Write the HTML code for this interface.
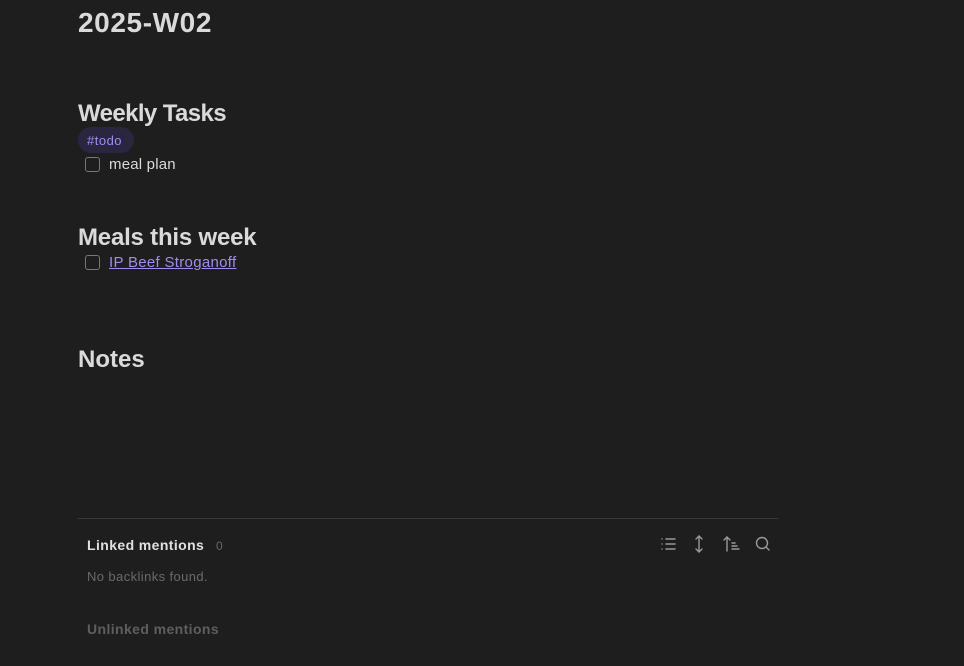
<!DOCTYPE html>
<html><head><style>
body{margin:0;width:964px;height:666px;background:#1e1e1e;font-family:"Liberation Sans",sans-serif;color:#dadada;position:relative;overflow:hidden}
.a{position:absolute;white-space:nowrap}
.cb{position:absolute;border:1px solid #777;border-radius:3px;box-sizing:border-box}
</style></head><body>
<div class="a" style="left:78px;top:7px;font-size:28px;font-weight:bold;letter-spacing:0.6px">2025-W02</div>
<div class="a" style="left:78px;top:100px;font-size:24px;font-weight:bold;letter-spacing:-0.6px">Weekly Tasks</div>
<div class="a" style="left:78px;top:127px;width:56px;height:26px;border-radius:13px;background:#2a2640"></div>
<div class="a" style="left:87px;top:133px;font-size:13px;color:#a18bf0;letter-spacing:0.5px">#todo</div>
<div class="cb" style="left:85px;top:157px;width:15px;height:15px"></div>
<div class="a" style="left:109px;top:156px;font-size:15px;letter-spacing:0.2px">meal plan</div>
<div class="a" style="left:78px;top:224px;font-size:24px;font-weight:bold;letter-spacing:-0.2px">Meals this week</div>
<div class="cb" style="left:85px;top:255px;width:15px;height:15px"></div>
<div class="a" style="left:109px;top:254px;font-size:15px;color:#a18bf0;text-decoration:underline;letter-spacing:0.3px">IP Beef Stroganoff</div>
<div class="a" style="left:78px;top:346px;font-size:24px;font-weight:bold;letter-spacing:0px">Notes</div>
<div class="a" style="left:78px;top:518px;width:700px;height:1px;background:#3a3a3a"></div>
<div class="a" style="left:87px;top:537px;font-size:14px;font-weight:bold;color:#e0e0e0;letter-spacing:0.4px">Linked mentions</div>
<div class="a" style="left:216px;top:539px;font-size:12px;color:#666">0</div>
<div class="a" style="left:87px;top:569px;font-size:13px;color:#6a6a6a;letter-spacing:0.4px">No backlinks found.</div>
<div class="a" style="left:87px;top:621px;font-size:14px;font-weight:bold;color:#5e5e5e;letter-spacing:0.4px">Unlinked mentions</div>
<svg class="a" style="left:656px;top:533px" width="120" height="22" fill="none" stroke="#999" stroke-width="1.4" stroke-linecap="round">
<path d="M6 6h0M6 11h0M6 16h0M10 6h9M10 11h9M10 16h9"/>
<path d="M43 3v16M40 6l3-3 3 3M40 16l3 3 3-3"/>
<path d="M71 4v14M68 7l3-3 3 3M76 10h3M76 13h5M76 16h7"/>
<circle cx="106" cy="10" r="5.5"/><path d="M110 14l3 3"/>
</svg>
</body></html>
